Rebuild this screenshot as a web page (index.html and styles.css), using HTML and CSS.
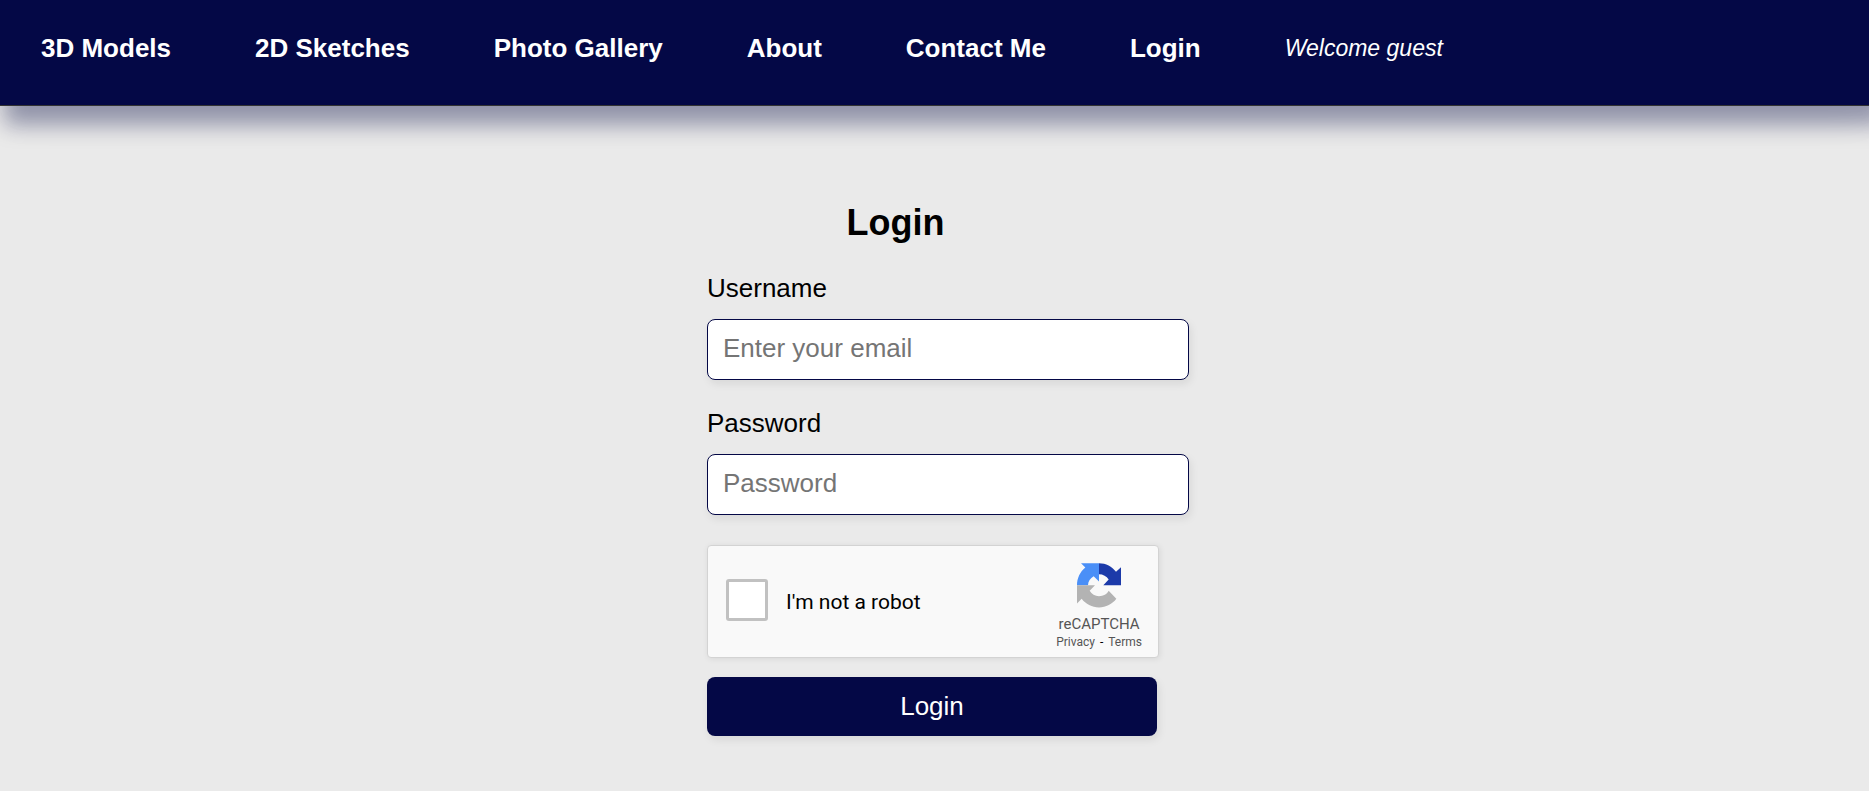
FILE: index.html
```html
<!DOCTYPE html>
<html lang="en">
<head>
<meta charset="utf-8">
<title>Login</title>
<link rel="stylesheet" href="styles.css">
</head>
<body>
<header class="site-header">
  <nav class="nav">
    <a href="#models">3D Models</a>
    <a href="#sketches">2D Sketches</a>
    <a href="#gallery">Photo Gallery</a>
    <a href="#about">About</a>
    <a href="#contact">Contact Me</a>
    <a href="#login">Login</a>
    <span class="welcome">Welcome guest</span>
  </nav>
</header>
<main class="page">
  <form class="login-form">
    <h1 class="title">Login</h1>
    <label class="label" for="username">Username</label>
    <input class="field" id="username" type="text" placeholder="Enter your email">
    <label class="label" for="password">Password</label>
    <input class="field" id="password" type="password" placeholder="Password">
    <div class="captcha">
      <input class="captcha-box" id="robot" type="checkbox">
      <label class="captcha-label" for="robot">I'm not a robot</label>
      <div class="captcha-brand">
        <svg class="captcha-logo" viewBox="0 0 132 134" aria-hidden="true">
          <path fill="#4a8ff7" d="M12 0H66V55L50 39C40 45 33 54 33 66H0C0 45 9 26 25 13Z"/>
          <path fill="#1c3aa9" d="M66 0C87 0 105 10 117 26L132 12V66H79L95 49C89 39 78 33 66 33Z"/>
          <path fill="#b3b3b3" d="M0 66H54L38 83C44 93 54 99 66 99C79 99 90 93 95 83L118 107C106 123 87 133 66 133C45 133 26 123 14 107L0 121Z"/>
        </svg>
        <span class="captcha-name">reCAPTCHA</span>
        <span class="captcha-links"><a href="#privacy">Privacy</a><span>-</span><a href="#terms">Terms</a></span>
      </div>
    </div>
    <button class="submit" type="submit">Login</button>
  </form>
</main>
</body>
</html>
```
FILE: styles.css
```css
* {
  box-sizing: border-box;
}

body {
  margin: 0;
  background: #eaeaea;
  color: #000;
  font-family: "Liberation Sans", Arial, sans-serif;
  font-size: 26px;
  line-height: 30px;
}

.site-header {
  padding: 33px 41px 42px;
  background: #040846;
  border-bottom: 1px solid #333;
  box-shadow: 11px 13px 20px 6px rgba(4, 8, 70, 0.35), 0 10px 40px rgba(0, 0, 0, 0.06);
}

.nav {
  display: flex;
  align-items: center;
  gap: 84px;
  color: #fff;
  white-space: nowrap;
}

.nav a {
  color: inherit;
  font-weight: bold;
  text-decoration: none;
}

.welcome {
  font-size: 23px;
  font-style: italic;
}

.page {
  display: flex;
  justify-content: center;
  padding: 96px 0 40px 27px;
}

.login-form {
  display: flex;
  flex-direction: column;
  width: 482px;
}

.title {
  width: 377px;
  margin: 0 0 29px;
  font-size: 36px;
  line-height: 42px;
  text-align: center;
}

.label {
  margin-bottom: 16px;
}

.field {
  width: 100%;
  height: 61px;
  margin: 0 0 28px;
  padding: 14px 15px 16px;
  border: 1px solid #040846;
  border-radius: 8px;
  background: #fff;
  box-shadow: 2px 4px 8px rgba(0, 0, 0, 0.08);
  font: inherit;
}

.field::placeholder {
  color: #757575;
}

.captcha {
  display: flex;
  align-items: center;
  width: 452px;
  height: 113px;
  margin: 2px 0 19px;
  padding: 0 16px 0 18px;
  border: 1px solid #d3d3d3;
  border-radius: 4px;
  background: #f9f9f9;
  box-shadow: 1px 1px 6px rgba(0, 0, 0, 0.08);
  font-family: Roboto, sans-serif;
}

.captcha-box {
  appearance: none;
  width: 42px;
  height: 42px;
  margin: 0 18px 4px 0;
  border: 3px solid #c1c1c1;
  border-radius: 3px;
  background: #fff;
}

.captcha-label {
  flex: 1;
  font-size: 21px;
}

.captcha-brand {
  display: flex;
  flex-direction: column;
  align-items: center;
  padding-top: 9px;
  color: #555;
}

.captcha-logo {
  width: 44px;
  height: 45px;
  margin-bottom: 6px;
}

.captcha-name {
  font-size: 15px;
  line-height: 20px;
}

.captcha-links {
  display: flex;
  gap: 5px;
  color: #000;
  font-size: 12px;
  line-height: 16px;
}

.captcha-links a {
  color: #555;
  text-decoration: none;
}

.submit {
  width: 450px;
  height: 59px;
  padding: 0 0 2px;
  border: 0;
  border-radius: 8px;
  background: #040846;
  box-shadow: 2px 4px 8px rgba(0, 0, 0, 0.08);
  color: #fff;
  font: inherit;
}
```
